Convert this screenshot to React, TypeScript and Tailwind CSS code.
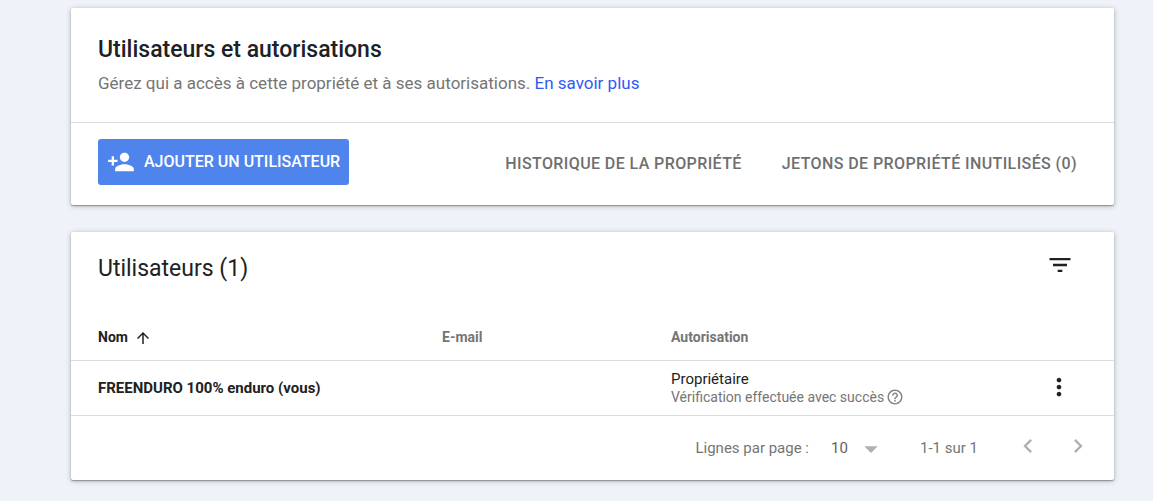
import {
  MdArrowDropDown,
  MdArrowUpward,
  MdChevronLeft,
  MdChevronRight,
  MdFilterList,
  MdHelpOutline,
  MdMoreVert,
  MdPersonAdd,
} from "react-icons/md";

const USERS = [
  {
    name: "FREENDURO 100% enduro (vous)",
    email: "",
    permission: "Propriétaire",
    status: "Vérification effectuée avec succès",
  },
];

const CARD =
  "rounded-xs bg-white shadow-[0_1px_5px_rgba(60,64,67,0.4),0_1px_1px_rgba(60,64,67,0.4)]";

function Header() {
  return (
    <section className={CARD}>
      <div className="border-b border-[#dcdcdc] px-[27px] pt-[26px] pb-6">
        <h1 className="text-[23px] leading-8 font-medium text-[#202124]">
          Utilisateurs et autorisations
        </h1>
        <p className="pt-1.5 pb-1 text-[17px] leading-[22px] text-[#757575]">
          Gérez qui a accès à cette propriété et à ses autorisations.{" "}
          <a href="#" className="text-[#2f5af5]">
            En savoir plus
          </a>
        </p>
      </div>
      <div className="flex items-start justify-between pt-4 pr-[37px] pb-5 pl-[27px]">
        <button
          type="button"
          className="flex h-[46px] items-center gap-[9px] rounded-[3px] bg-[#5084ed] px-[9px] text-[16px] font-medium text-white"
        >
          <MdPersonAdd className="size-7" />
          AJOUTER UN UTILISATEUR
        </button>
        <div className="flex gap-10 pt-[13px] text-[16px] leading-6 font-medium tracking-wide text-[#6f6f6f]">
          <button type="button">HISTORIQUE DE LA PROPRIÉTÉ</button>
          <button type="button">JETONS DE PROPRIÉTÉ INUTILISÉS (0)</button>
        </div>
      </div>
    </section>
  );
}

function UsersTable() {
  return (
    <table className="w-full table-fixed text-left text-[14px] text-[#212121]">
      <colgroup>
        <col className="w-[371px]" />
        <col className="w-[229px]" />
        <col />
        <col className="w-[110px]" />
      </colgroup>
      <thead>
        <tr className="h-12 border-b border-[#dcdcdc] text-[#757575]">
          <th scope="col" className="pt-1 pl-[27px] font-bold text-[#212121]">
            <button type="button" className="flex items-center gap-[6px]">
              Nom
              <MdArrowUpward className="size-[18px]" />
            </button>
          </th>
          <th scope="col" className="pt-1 font-bold">
            E-mail
          </th>
          <th scope="col" className="pt-1 font-bold">
            Autorisation
          </th>
          <td />
        </tr>
      </thead>
      <tbody>
        {USERS.map((user) => (
          <tr key={user.name} className="h-[55px] border-b border-[#dcdcdc]">
            <td className="pt-0.5 pl-[27px] text-[15px] font-bold">
              {user.name}
            </td>
            <td>{user.email}</td>
            <td>
              <div className="text-[15px] leading-[18px]">{user.permission}</div>
              <div className="flex items-center gap-0.5 leading-4 text-[#757575]">
                {user.status}
                <button type="button" aria-label="Aide">
                  <MdHelpOutline className="size-[18px] text-[#858585]" />
                </button>
              </div>
            </td>
            <td className="pb-0.5">
              <button
                type="button"
                aria-label="Autres actions"
                className="mx-auto block"
              >
                <MdMoreVert className="size-7" />
              </button>
            </td>
          </tr>
        ))}
      </tbody>
    </table>
  );
}

function Pagination() {
  return (
    <div className="flex h-16 items-center justify-end pr-[22px] text-[15px] text-[#757575]">
      <label htmlFor="rows" className="pt-0.5">
        Lignes par page :
      </label>
      <div className="ml-[22px] grid items-center pt-0.5">
        <select
          id="rows"
          defaultValue="10"
          className="col-start-1 row-start-1 w-14 appearance-none text-[#616161]"
        >
          <option>10</option>
          <option>25</option>
          <option>50</option>
        </select>
        <MdArrowDropDown className="pointer-events-none col-start-1 row-start-1 size-8 justify-self-end text-[#b0b0b0]" />
      </div>
      <span className="ml-[33px] pt-0.5">1-1 sur 1</span>
      <div className="ml-9 flex gap-[22px] pb-1 text-[#b0b0b0]">
        <button type="button" aria-label="Page précédente">
          <MdChevronLeft className="size-7" />
        </button>
        <button type="button" aria-label="Page suivante">
          <MdChevronRight className="size-7" />
        </button>
      </div>
    </div>
  );
}

export default function App() {
  return (
    <main className="flex min-h-screen flex-col gap-[27px] bg-[#eff3f9] pt-2 pr-[39px] pb-5 pl-[71px] font-[Roboto,sans-serif]">
      <Header />
      <section className={CARD}>
        <div className="flex items-start justify-between pt-[19px] pr-10 pb-[25px] pl-[27px]">
          <h2 className="text-[23px] leading-9 text-[#212121]">
            Utilisateurs (1)
          </h2>
          <button type="button" aria-label="Filtrer">
            <MdFilterList className="size-7 text-[#212121]" />
          </button>
        </div>
        <UsersTable />
        <Pagination />
      </section>
    </main>
  );
}
